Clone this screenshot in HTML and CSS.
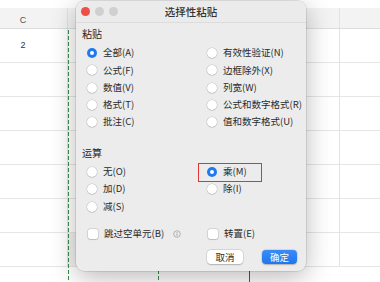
FILE: index.html
```html
<!DOCTYPE html>
<html lang="zh">
<head>
<meta charset="utf-8">
<link rel="stylesheet" href="styles.css">
</head>
<body>
<div class="sheet">
  <div class="hdr">
    <div class="cell c0"><span class="colname">C</span></div>
    <div class="cell c1"></div>
    <div class="cell c2"></div>
    <div class="cell c3"></div>
    <div class="cell c4"></div>
  </div>
  <div class="row"><div class="cell c0"><span class="val">2</span></div><div class="cell c1"></div><div class="cell c2"></div><div class="cell c3"></div><div class="cell c4"></div></div>
  <div class="row"><div class="cell c0"></div><div class="cell c1"></div><div class="cell c2"></div><div class="cell c3"></div><div class="cell c4"></div></div>
  <div class="row"><div class="cell c0"></div><div class="cell c1"></div><div class="cell c2"></div><div class="cell c3"></div><div class="cell c4"></div></div>
  <div class="row"><div class="cell c0"></div><div class="cell c1"></div><div class="cell c2"></div><div class="cell c3"></div><div class="cell c4"></div></div>
  <div class="row"><div class="cell c0"></div><div class="cell c1"></div><div class="cell c2"></div><div class="cell c3"></div><div class="cell c4"></div></div>
  <div class="row"><div class="cell c0"></div><div class="cell c1"></div><div class="cell c2"></div><div class="cell c3"></div><div class="cell c4"></div></div>
  <div class="row"><div class="cell c0"></div><div class="cell c1 sel"></div><div class="cell c2"></div><div class="cell c3"></div><div class="cell c4"></div></div>
</div>
<div class="ants ants-l"></div>
<div class="ants ants-r"></div>
<div class="active-line"></div>

<div class="dialog">
  <div class="titlebar">
    <div class="lights"><span class="light red"></span><span class="light"></span><span class="light"></span></div>
    <div class="title">选择性粘贴</div>
  </div>
  <div class="body">
    <div class="section">粘贴</div>
    <div class="opts">
      <div class="opt"><span class="radio on"></span>全部(A)</div>
      <div class="opt"><span class="radio"></span>有效性验证(N)</div>
      <div class="opt"><span class="radio"></span>公式(F)</div>
      <div class="opt"><span class="radio"></span>边框除外(X)</div>
      <div class="opt"><span class="radio"></span>数值(V)</div>
      <div class="opt"><span class="radio"></span>列宽(W)</div>
      <div class="opt"><span class="radio"></span>格式(T)</div>
      <div class="opt"><span class="radio"></span>公式和数字格式(R)</div>
      <div class="opt"><span class="radio"></span>批注(C)</div>
      <div class="opt"><span class="radio"></span>值和数字格式(U)</div>
    </div>
    <div class="section sec2">运算</div>
    <div class="opts">
      <div class="opt"><span class="radio"></span>无(O)</div>
      <div class="opt mark"><span class="radio on"></span>乘(M)</div>
      <div class="opt"><span class="radio"></span>加(D)</div>
      <div class="opt"><span class="radio"></span>除(I)</div>
      <div class="opt"><span class="radio"></span>减(S)</div>
    </div>
    <div class="opts checks">
      <div class="opt"><span class="check"></span>跳过空单元(B)<svg class="info" width="8" height="8" viewBox="0 0 8 8"><circle cx="4" cy="4" r="3.3" fill="none" stroke="#9a9a9a" stroke-width="0.7"/><circle cx="4" cy="2.4" r="0.5" fill="#9a9a9a"/><rect x="3.6" y="3.4" width="0.8" height="2.5" fill="#9a9a9a"/></svg></div>
      <div class="opt"><span class="check"></span>转置(E)</div>
    </div>
    <div class="buttons">
      <button class="btn">取消</button>
      <button class="btn primary">确定</button>
    </div>
  </div>
</div>
</body>
</html>
```
FILE: styles.css
```css
* { box-sizing: border-box; }
html, body { margin: 0; padding: 0; }
body {
  width: 380px;
  height: 282px;
  overflow: hidden;
  background: #fff;
  font-family: "Noto Sans CJK SC", "Noto Sans", sans-serif;
  position: relative;
}
.sheet { padding-top: 8px; }
.hdr, .row { display: flex; }
.hdr { height: 21px; background: #f3f3f3; border-bottom: 1px solid #dedede; }
.row { height: 34px; border-bottom: 1px solid #e6e6e6; }
.cell { border-right: 1px solid #e3e3e3; height: 100%; }
.c0 { width: 68px; }
.c1 { width: 90px; }
.c2 { width: 91px; }
.c3 { width: 91px; }
.c4 { flex: 1; border-right: none; }
.sel { background: #f1f1f1; }
.colname { display: block; width: 46px; text-align: center; font-size: 9px; color: #555; padding-top: 7px; font-family: "Liberation Sans", sans-serif; }
.val { display: block; width: 46px; text-align: center; font-size: 9px; color: #333; line-height: 33px; font-family: "Liberation Sans", sans-serif; }

.ants {
  position: absolute;
  top: 30px;
  width: 1px;
  height: 260px;
  background: repeating-linear-gradient(to bottom, #3d8a4e 0 4px, transparent 4px 6px);
}
.ants-l { left: 68px; }
.ants-r { left: 158px; }
.active-line { position: absolute; left: 249px; top: 234px; width: 1px; height: 60px; background: #2f6b3c; }

.dialog {
  position: absolute;
  left: 76px;
  top: 1px;
  width: 230px;
  height: 270px;
  background: #ececec;
  border-radius: 8px;
  box-shadow: 0 0 0 0.5px rgba(0,0,0,0.18), 0 6px 26px rgba(0,0,0,0.28);
  overflow: hidden;
  color: #2a2a2a;
  font-size: 9.5px;
}
.titlebar {
  height: 22px;
  display: flex;
  align-items: center;
  position: relative;
  border-bottom: 1px solid #dcdcdc;
  background: #ebebeb;
}
.lights { display: flex; gap: 5px; padding-left: 5px; }
.light { width: 9px; height: 9px; border-radius: 50%; background: #d0d0d0; }
.light.red { background: #ee4f45; }
.title {
  position: absolute; left: 0; right: 0; top: 0; line-height: 22px;
  text-align: center; font-size: 10.5px; color: #333; font-weight: 500;
}
.body { padding: 5px 9px 0 6px; }
.section { line-height: 12px; height: 12px; font-size: 10px; color: #262626; }
.sec2 { margin-top: 16px; }
.opts {
  display: grid;
  grid-template-columns: 120px 1fr;
  grid-auto-rows: 17.3px;
  padding-left: 5px;
  margin-top: 4.4px;
}
.opt { display: flex; align-items: center; gap: 6px; white-space: nowrap; line-height: 1; position: relative; }
.radio {
  width: 10px; height: 10px; border-radius: 50%;
  background: #fff;
  box-shadow: 0 0 0 0.5px rgba(0,0,0,0.18), 0 0.5px 1px rgba(0,0,0,0.12);
  flex: none;
}
.radio.on { background: #1f7af2; box-shadow: none; position: relative; }
.radio.on::after {
  content: ""; position: absolute; left: 3px; top: 3px; width: 4px; height: 4px; border-radius: 50%; background: #fff;
}
.mark::after {
  content: ""; position: absolute; left: -9px; top: 0px; width: 62px; height: 17px;
  border: 1.3px solid #e3342f;
}
.checks { margin-top: 10px; }
.check {
  width: 10px; height: 10px; border-radius: 2px; background: #fff; margin-left: 1px;
  box-shadow: 0 0 0 0.5px rgba(0,0,0,0.2), 0 0.5px 1px rgba(0,0,0,0.1);
  flex: none;
}
.info { margin-left: 3px; }
.buttons { display: flex; justify-content: flex-end; gap: 19px; margin-top: 7.3px; }
.btn {
  font-family: inherit; font-size: 9.5px; border: none; padding: 0;
  width: 36px; height: 14px; line-height: 14px; border-radius: 4px;
  background: #fff; color: #2a2a2a;
  box-shadow: 0 0 0 0.5px rgba(0,0,0,0.12), 0 0.5px 1.5px rgba(0,0,0,0.2);
}
.btn.primary { width: 35px; background: linear-gradient(#3a8cf7, #1f76ee); color: #fff; }
```
